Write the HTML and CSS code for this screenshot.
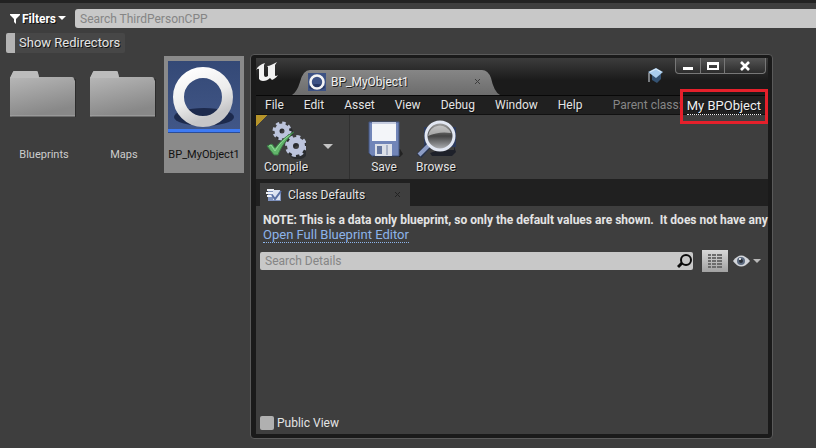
FILE: index.html
```html
<!DOCTYPE html>
<html lang="en">
<head>
    <meta charset="UTF-8">
    <meta name="viewport" content="width=device-width, initial-scale=1.0">
    <title>BP_MyObject1</title>
    <link rel="stylesheet" href="styles.css">
</head>
<body>
    <!-- Content browser -->
    <main class="browser">
        <div class="filter-row">
            <button class="filters">
                <svg width="10" height="10" viewBox="0 0 10 10"><path d="M0 0h10v1L6 5v5L4 8V5L0 1z" fill="#fff"/></svg>
                Filters
                <svg width="8" height="5" viewBox="0 0 8 5"><path d="M0 0h8L4 4z" fill="#fff"/></svg>
            </button>
            <input type="text" class="search" placeholder="Search ThirdPersonCPP" aria-label="Search assets">
        </div>
        <button class="redirectors">Show Redirectors</button>
        <div class="assets">
            <div class="asset">
                <svg class="thumb" width="72" height="72" viewBox="0 0 72 72">
                    <defs>
                        <linearGradient id="folder" x1="0" y1="0" x2="0.3" y2="1">
                            <stop offset="0" stop-color="#bdbdbd"/>
                            <stop offset="1" stop-color="#888"/>
                        </linearGradient>
                    </defs>
                    <path d="M4 18h64v38H4z" fill="#2c2c2c"/>
                    <path d="M2 17l3-6q0-1 2-1h21q2 0 2 2l1 4h33q2 0 2 2l1 2v35H2z" fill="url(#folder)"/>
                    <path d="M2 17l3-6q0-1 2-1h21q2 0 2 2l1 5z" fill="#bcbcbc"/>
                    <path d="M2 55h65" stroke="#aaa"/>
                </svg>
                <span class="asset-name">Blueprints</span>
            </div>
            <div class="asset">
                <svg class="thumb" width="72" height="72" viewBox="0 0 72 72">
                    <path d="M4 18h64v38H4z" fill="#2c2c2c"/>
                    <path d="M2 17l3-6q0-1 2-1h21q2 0 2 2l1 4h33q2 0 2 2l1 2v35H2z" fill="url(#folder)"/>
                    <path d="M2 17l3-6q0-1 2-1h21q2 0 2 2l1 5z" fill="#bcbcbc"/>
                    <path d="M2 55h65" stroke="#aaa"/>
                </svg>
                <span class="asset-name">Maps</span>
            </div>
            <div class="asset selected">
                <svg class="thumb" width="72" height="72" viewBox="0 0 72 72">
                    <defs>
                        <linearGradient id="sky" x1="0" y1="0" x2="0" y2="1">
                            <stop offset="0" stop-color="#344976"/>
                            <stop offset="1" stop-color="#425788"/>
                        </linearGradient>
                        <linearGradient id="ring" x1="0" y1="0" x2="0.4" y2="1">
                            <stop offset="0" stop-color="#fff"/>
                            <stop offset="0.6" stop-color="#ececec"/>
                            <stop offset="1" stop-color="#c6c6c8"/>
                        </linearGradient>
                    </defs>
                    <path d="M0 0h72v72H0z" fill="url(#sky)"/>
                    <ellipse cx="36" cy="56" rx="30" ry="9" fill="#1d2a4d"/>
                    <ellipse cx="36" cy="59" rx="17" ry="4" fill="#344a7b"/>
                    <circle cx="35" cy="36" r="24.5" fill="none" stroke="url(#ring)" stroke-width="11"/>
                    <path d="M0 68h72v3H0z" fill="#3e7bf5"/>
                    <path d="M0 71h72v1H0z" fill="#2b4d96"/>
                </svg>
                <span class="asset-name">BP_MyObject1</span>
            </div>
        </div>
    </main>

    <!-- Blueprint editor window -->
    <section class="window">
        <header class="titlebar">
            <svg class="logo" width="22" height="20" viewBox="0 0 22 20">
                <path d="M0 8C2 4 5 2 9 1L8 3v10q0 2 2 2l2-1V5l-1-1C14 4 17 2 21 0l-2 3v10q0 2 3 0c-2 3-4 4-6 5l-2-2c-2 2-4 3-7 3-2 0-3-1-4-2V7Q2 6 0 8z" fill="#f2f2f2"/>
            </svg>
            <div class="doc-tab">
                <svg width="18" height="18" viewBox="0 0 18 18">
                    <path d="M0 0h18v18H0z" fill="#3d5284"/>
                    <ellipse cx="9" cy="14" rx="8" ry="3" fill="#263763"/>
                    <circle cx="9" cy="9" r="6.5" fill="none" stroke="#f4f4f4" stroke-width="2.6"/>
                </svg>
                <span class="doc-name">BP_MyObject1</span>
                <button class="close" aria-label="Close tab"><svg width="7" height="7" viewBox="0 0 7 7"><path d="M1 1l5 5M6 1L1 6" stroke="#3c3c3c"/></svg></button>
            </div>
            <svg class="tutorial" width="16" height="16" viewBox="0 0 16 16">
                <path d="M4 7v5l5 3 4-4V6z" fill="#345272"/>
                <path d="M0 4l8-4 7 4-7 6z" fill="#a9cdee"/>
                <path d="M2 4l6-3 5 3" fill="none" stroke="#dcecfa"/>
                <path d="M1 5v9" stroke="#d5dde6"/>
            </svg>
            <div class="window-buttons">
                <button aria-label="Minimize"><svg width="10" height="12" viewBox="0 0 10 12"><path d="M0 7h10v3H0z" fill="#fff"/></svg></button>
                <button aria-label="Maximize"><svg width="12" height="10" viewBox="0 0 12 10"><path d="M0 1h12v8H0zM2 4v3h8V4z" fill="#fff" fill-rule="evenodd"/></svg></button>
                <button class="wide" aria-label="Close"><svg width="10" height="10" viewBox="0 0 10 10"><path d="M1 1l8 8M9 1L1 9" stroke="#fff" stroke-width="2.6"/></svg></button>
            </div>
        </header>

        <nav class="menubar">
            <button>File</button>
            <button>Edit</button>
            <button>Asset</button>
            <button>View</button>
            <button>Debug</button>
            <button>Window</button>
            <button>Help</button>
            <span class="parent-label">Parent class:</span>
            <span class="highlight"><a href="#">My BPObject</a></span>
        </nav>

        <div class="toolbar">
            <button class="tool">
                <svg width="40" height="40" viewBox="0 0 40 40">
                    <g fill="none" stroke="#1e2126" opacity="0.6">
                        <circle cx="18" cy="14" r="6" stroke-width="6"/>
                        <circle cx="32" cy="30" r="7" stroke-width="7"/>
                    </g>
                    <g fill="none" stroke="#bcc4dc">
                        <circle cx="16" cy="12" r="5" stroke-width="5"/>
                        <circle cx="16" cy="12" r="8" stroke-width="3" stroke-dasharray="3.4 2.88"/>
                        <circle cx="30" cy="27" r="6" stroke-width="6"/>
                        <circle cx="30" cy="27" r="9.5" stroke-width="3" stroke-dasharray="4 3.46"/>
                    </g>
                    <path d="M1 27l5-2 3 4C15 22 21 16 28 13c-8 8-13 15-16 23H8z" fill="#62b56b" stroke="#3c7a46"/>
                    <path d="M3 27l2-1 4 6C13 25 18 20 24 16" fill="none" stroke="#91dc98"/>
                </svg>
                Compile
            </button>
            <button class="drop" aria-label="Compile options"><svg width="10" height="6" viewBox="0 0 10 6"><path d="M0 0h10L5 5z" fill="#c4c4c4"/></svg></button>
            <button class="tool">
                <svg width="40" height="40" viewBox="0 0 40 40">
                    <path d="M8 31l28-1 3 5-3 3H9z" fill="#222"/>
                    <path d="M5 3h30v34H8l-3-3z" fill="#7185b8" stroke="#43547e"/>
                    <path d="M8 3h24v19H8z" fill="#f3f5f9"/>
                    <path d="M8 3h24v2H8z" fill="#c5cce0"/>
                    <path d="M11 25h17v12H11z" fill="#dce0e8"/>
                    <path d="M13 27h5v8h-5z" fill="#66779f"/>
                    <path d="M22 26h2v10h-2z" fill="#abb4c8"/>
                </svg>
                Save
            </button>
            <button class="tool">
                <svg width="40" height="40" viewBox="0 0 40 40">
                    <defs>
                        <linearGradient id="lens" x1="0" y1="0" x2="0" y2="1">
                            <stop offset="0" stop-color="#aaa"/>
                            <stop offset="0.5" stop-color="#444"/>
                            <stop offset="1" stop-color="#b6b8bc"/>
                        </linearGradient>
                    </defs>
                    <path d="M14 34l9-3h15v-4l2 6-4 4H16z" fill="#1e212a"/>
                    <path d="M8 8h32v20H8z" fill="#2c3a5c"/>
                    <path d="M13 26L3 37" stroke="#26314a" stroke-width="6"/>
                    <path d="M13 26L3 36" stroke="#8c9cc4" stroke-width="4"/>
                    <circle cx="24" cy="17" r="14" fill="url(#lens)" stroke="#e2e7f2" stroke-width="3"/>
                    <path d="M12 17a12 12 0 0 1 23-3q-12-2-23 3z" fill="#e2e2e2" opacity="0.6"/>
                </svg>
                Browse
            </button>
        </div>

        <div class="tabstrip">
            <div class="panel-tab">
                <svg width="16" height="14" viewBox="0 0 16 14">
                    <path d="M2 3h13v10H2z" fill="#7f92bd"/>
                    <path d="M1 1h7v2H1zM0 4h7v2H0zM1 7h6v2H1z" fill="#eef1f7"/>
                    <path d="M7 2h7v10H7z" fill="#dce3f2"/>
                    <path d="M6 7l3 4 6-8" fill="none" stroke="#5a70a4" stroke-width="2"/>
                </svg>
                <span>Class Defaults</span>
                <button class="close" aria-label="Close panel"><svg width="7" height="7" viewBox="0 0 7 7"><path d="M1 1l5 5M6 1L1 6" stroke="#222"/></svg></button>
            </div>
        </div>

        <div class="details">
            <p class="note">NOTE: This is a data only blueprint, so only the default values are shown. &nbsp;It does not have any</p>
            <a href="#" class="full-editor">Open Full Blueprint Editor</a>
            <div class="search-row">
                <div class="search-box">
                    <input type="text" placeholder="Search Details" aria-label="Search details">
                    <svg width="16" height="16" viewBox="0 0 16 16"><circle cx="9" cy="7" r="5" fill="none" stroke="#0c0c0c" stroke-width="2"/><path d="M5 10l-4 4" stroke="#0c0c0c" stroke-width="3"/></svg>
                </div>
                <button class="matrix" aria-label="Property matrix">
                    <svg width="14" height="16" viewBox="0 0 14 16"><path d="M0 2h14M0 5h14M0 8h14M0 11h14M0 14h14" stroke="#6c6c6c" stroke-width="2" stroke-dasharray="3 1 4 1 5 1"/></svg>
                </button>
                <button class="view-options" aria-label="View options">
                    <svg width="17" height="12" viewBox="0 0 17 12"><path d="M0 6q8-11 17 0-9 11-17 0z" fill="#d2d5da"/><circle cx="8" cy="6" r="4" fill="#5d6b80"/><circle cx="8" cy="6" r="2" fill="#2a3038"/><circle cx="7" cy="4" r="1" fill="#fff"/></svg>
                    <svg width="8" height="5" viewBox="0 0 8 5"><path d="M0 0h8L4 4z" fill="#b8b8b8"/></svg>
                </button>
            </div>
            <label class="public-view"><input type="checkbox">Public View</label>
        </div>
    </section>
</body>
</html>
```

FILE: styles.css
```css
* {
    box-sizing: border-box;
}
body {
    margin: 0;
    min-height: 100vh;
    position: relative;
    background-color: #3e3e3e;
    border-top: 3px solid #222;
    font-family: Roboto, "Liberation Sans", sans-serif;
    font-size: 12px;
    line-height: 16px;
    color: #e4e4e4;
    overflow: hidden;
}
button {
    padding: 0;
    border: none;
    background: none;
    font: inherit;
    color: inherit;
    text-shadow: 1px 1px 0 #111;
}
svg {
    display: block;
    flex: none;
}
input {
    font: inherit;
}
input::placeholder {
    color: #858585;
    opacity: 1;
}

/* content browser */
.filter-row {
    display: flex;
    align-items: center;
    padding: 6px 0 0 10px;
}
.filters {
    display: flex;
    align-items: center;
    gap: 2px;
    width: 65px;
    font-weight: bold;
    color: #fff;
}
.search {
    flex: 1;
    min-width: 0;
    height: 19px;
    padding: 0 5px;
    border: none;
    border-radius: 3px 0 0 3px;
    background-color: #c8c8c8;
}
.redirectors {
    display: block;
    height: 20px;
    margin: 5px 0 3px 6px;
    padding: 0 5px 0 4px;
    border-left: 9px solid #b4b4b4;
    border-radius: 2px;
    background-color: #474747;
    font-size: 13px;
}
.assets {
    display: flex;
    padding-left: 4px;
}
.asset {
    display: flex;
    flex-direction: column;
    align-items: center;
    width: 80px;
    height: 117px;
    padding-top: 5px;
}
.asset-name {
    margin-top: 14px;
    font-size: 11px;
    color: #cdcdcd;
}
.selected {
    background-color: #8a8a8a;
}
.selected .asset-name {
    color: #111;
}

/* editor window */
.window {
    position: absolute;
    top: 51px;
    right: 43px;
    bottom: 9px;
    left: 250px;
    display: flex;
    flex-direction: column;
    padding: 3px 4px 4px 5px;
    border: 1px solid #5a5a5a;
    border-radius: 4px;
    background-color: #1a1a1a;
}
.titlebar {
    display: flex;
    align-items: flex-start;
    height: 37px;
    background: linear-gradient(#3c3c3c, #1b1b1b 60%);
}
.logo {
    margin: 4px 14px 0 0;
}
.doc-tab {
    display: flex;
    align-items: center;
    width: 208px;
    height: 25px;
    margin-top: 12px;
    padding: 0 19px 2px 16px;
    background: linear-gradient(#868686, #6c6c6c);
    clip-path: path("M0 25Q5 22 8 12Q11 0 18 0H190Q196 0 199 8Q202 22 208 25Z");
}
.doc-name {
    margin-left: 5px;
    color: #f0f0f0;
    text-shadow: 1px 1px 0 #222;
}
.close {
    margin-left: auto;
}
.tutorial {
    margin: 10px 11px 0 auto;
}
.window-buttons {
    display: flex;
    margin-right: 2px;
    border: 1px solid #777;
    border-top: none;
    border-radius: 0 0 4px 4px;
    background: linear-gradient(#555, #2c2c2c);
}
.window-buttons button {
    display: flex;
    align-items: center;
    justify-content: center;
    width: 24px;
    height: 15px;
}
.window-buttons button + button {
    border-left: 1px solid #777;
}
.window-buttons .wide {
    width: 41px;
}
.menubar {
    position: relative;
    z-index: 1;
    display: flex;
    align-items: center;
    gap: 20px;
    height: 20px;
    padding-left: 9px;
    border-top: 1px solid #080808;
    border-bottom: 1px solid #111;
    background-color: #202020;
}
.parent-label {
    margin-left: auto;
    color: #868686;
    white-space: nowrap;
}
.highlight {
    flex: none;
    margin: 2px 0 0 -22px;
    padding: 6px 4px;
    border: 3px solid #e5202b;
}
.highlight a {
    display: block;
    border-bottom: 1px dotted #eee;
    color: #f0f0f0;
    font-size: 13px;
    text-decoration: none;
    text-shadow: 1px 1px 0 #111;
}
.toolbar {
    display: flex;
    height: 64px;
    padding-left: 4px;
    background: linear-gradient(135deg, #b6942a 8px, #3e3e3e 8px);
}
.tool {
    display: flex;
    flex-direction: column;
    align-items: center;
    width: 52px;
    padding-top: 4px;
}
.drop {
    display: flex;
    align-items: center;
    justify-content: center;
    width: 38px;
    margin-right: 8px;
    padding-right: 6px;
    border-right: 1px solid #303030;
}
.tabstrip {
    display: flex;
    height: 27px;
    padding: 4px 4px 0;
    background-color: #202020;
}
.panel-tab {
    display: flex;
    align-items: center;
    gap: 6px;
    width: 150px;
    padding: 0 9px 0 6px;
    background-color: #3e3e3e;
    color: #e4e4e4;
    text-shadow: 1px 1px 0 #111;
}
.details {
    flex: 1;
    display: flex;
    flex-direction: column;
    align-items: flex-start;
    min-height: 0;
    padding: 6px 4px 3px;
    background-color: #3e3e3e;
}
.note {
    margin: 0 0 0 3px;
    font-weight: bold;
    line-height: 16px;
    white-space: nowrap;
}
.full-editor {
    margin-left: 3px;
    border-bottom: 1px dotted #8db4ea;
    color: #8db4ea;
    font-size: 13px;
    line-height: 14px;
    text-decoration: none;
}
.search-row {
    display: flex;
    align-items: center;
    align-self: stretch;
    margin-top: 7px;
}
.search-box {
    flex: 1;
    display: flex;
    align-items: center;
    height: 18px;
    border-radius: 2px;
    background-color: #c8c8c8;
}
.search-box input {
    flex: 1;
    min-width: 0;
    height: 18px;
    padding: 0 5px;
    border: none;
    background: none;
}
.matrix {
    display: flex;
    align-items: center;
    justify-content: center;
    width: 26px;
    height: 22px;
    margin: 0 5px 0 9px;
    background: linear-gradient(#d8d8d8, #a2a2a2);
}
.view-options {
    display: flex;
    align-items: center;
    gap: 3px;
    margin-right: 3px;
}
.public-view {
    display: flex;
    align-items: center;
    gap: 3px;
    margin-top: auto;
}
.public-view input {
    appearance: none;
    width: 14px;
    height: 14px;
    margin: 0;
    border-radius: 2px;
    background-color: #b0b0b0;
}
```
